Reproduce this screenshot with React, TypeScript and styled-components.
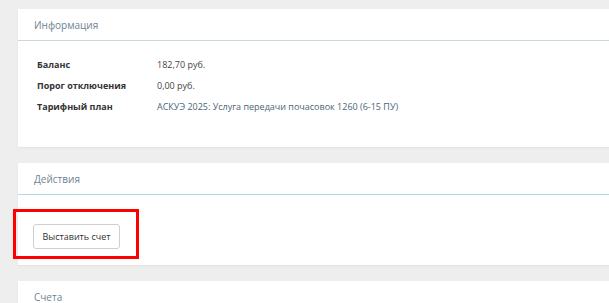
import React from "react";
import styled, { createGlobalStyle } from "styled-components";

const GlobalStyle = createGlobalStyle`
    html, body {
        margin: 0;
        padding: 0;
        background: #eeeeee;
        overflow: hidden;
    }
    body {
        font-family: "Open Sans", "Noto Sans", sans-serif;
        font-size: 9px;
        color: #333;
    }
`

const rows = [
    { label: "Баланс", value: "182,70 руб." },
    { label: "Порог отключения", value: "0,00 руб." },
    { label: "Тарифный план", value: "АСКУЭ 2025: Услуга передачи почасовок 1260 (6-15 ПУ)", accent: true },
]

export default function App() {
    return (
        <>
            <GlobalStyle />
            <Page>
                <Panel>
                    <PanelHeader $line="#c9d9e2">
                        <PanelTitle>Информация</PanelTitle>
                    </PanelHeader>
                    <InfoBody>
                        {rows.map((r) => (
                            <InfoRow key={r.label}>
                                <Label>{r.label}</Label>
                                <Value $accent={r.accent}>{r.value}</Value>
                            </InfoRow>
                        ))}
                    </InfoBody>
                </Panel>

                <Panel>
                    <PanelHeader $line="#addbe9">
                        <PanelTitle>Действия</PanelTitle>
                    </PanelHeader>
                    <ActionsBody>
                        <Highlight />
                        <Button>Выставить счет</Button>
                    </ActionsBody>
                </Panel>

                <Panel>
                    <PanelHeader $line="#c9d9e2">
                        <PanelTitle>Счета</PanelTitle>
                    </PanelHeader>
                </Panel>
            </Page>
        </>
    )
}

const Page = styled.div`
    display: flex;
    flex-direction: column;
    gap: 16px;
    padding: 9px 0 0 18px;
    width: calc(100% + 20px);
    box-sizing: border-box;
`

const Panel = styled.section`
    background: #fff;
    box-shadow: 0 1px 2px rgba(0, 0, 0, 0.06);
`

const PanelHeader = styled.div<{ $line: string }>`
    height: 31px;
    display: flex;
    align-items: center;
    padding-left: 16px;
    border-bottom: 1px solid ${(p) => p.$line};
`

const PanelTitle = styled.h3`
    margin: 0;
    font-size: 10px;
    font-weight: 400;
    color: #6f8392;
`

const InfoBody = styled.div`
    display: flex;
    flex-direction: column;
    gap: 7px;
    padding: 17px 19px 33px;
`

const InfoRow = styled.div`
    display: grid;
    grid-template-columns: 120px 1fr;
    line-height: 14px;
`

const Label = styled.span`
    font-weight: 700;
    color: #333;
`

const Value = styled.span<{ $accent?: boolean }>`
    color: ${(p) => (p.$accent ? "#4b6577" : "#444")};
`

const ActionsBody = styled.div`
    position: relative;
    padding: 29px 15px 16px;
`

const Highlight = styled.div`
    position: absolute;
    left: -5px;
    top: 14px;
    width: 126px;
    height: 50px;
    border: 3px solid #ff0000;
    box-sizing: border-box;
`

const Button = styled.button`
    height: 25px;
    width: 87px;
    padding: 0;
    background: #fff;
    border: 1px solid #cfcfcf;
    border-radius: 3px;
    font-family: "Open Sans", "Noto Sans", sans-serif;
    font-size: 9px;
    color: #333;
`
